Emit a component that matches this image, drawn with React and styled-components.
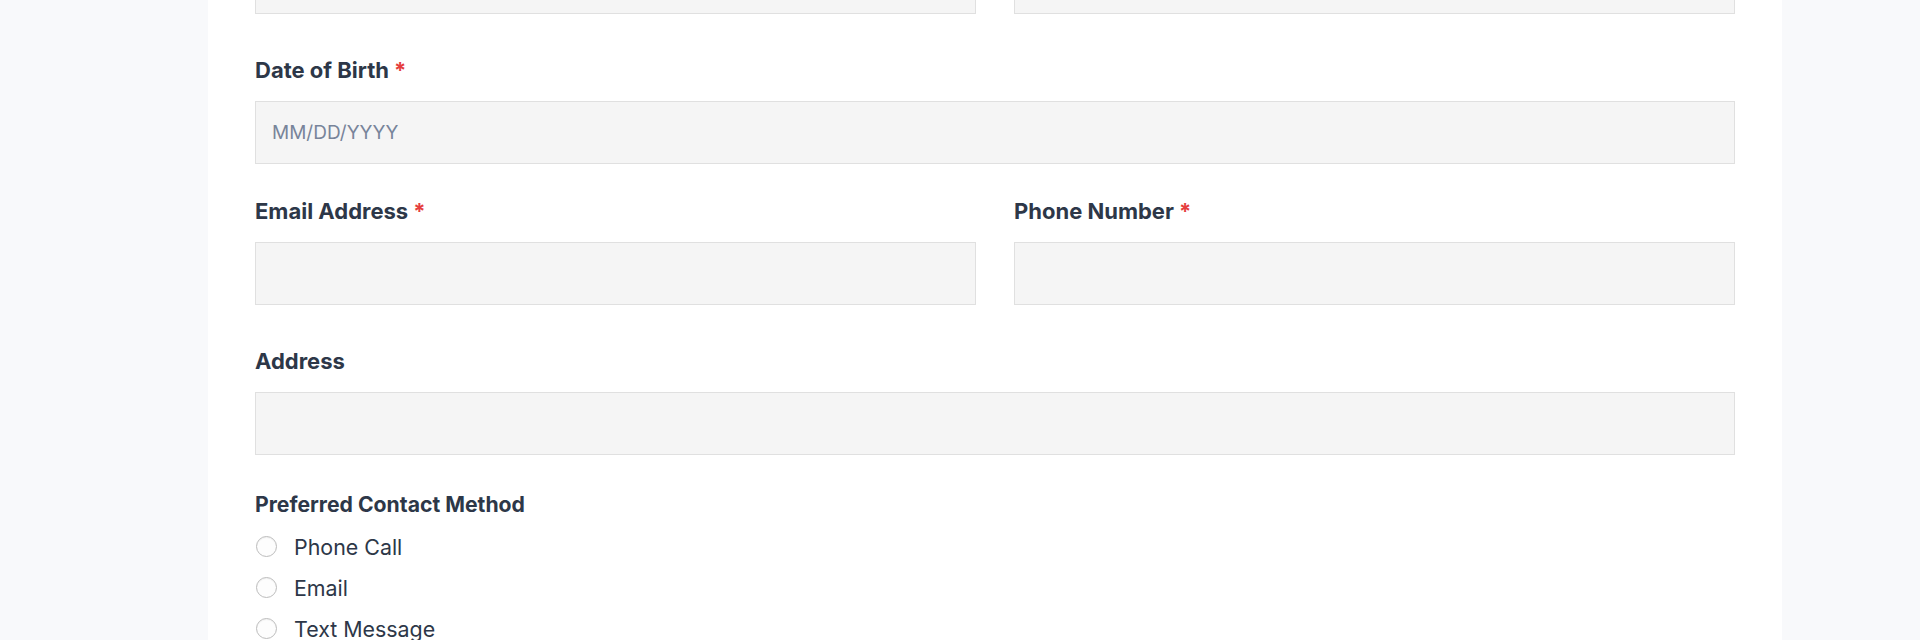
import React from 'react';
import styled, { createGlobalStyle } from 'styled-components';

const Global = createGlobalStyle`
  html, body { margin: 0; padding: 0; background: #f8f9fb; }
  body { font-family: Inter, "Noto Sans", sans-serif; -webkit-font-smoothing: antialiased; }
  * { box-sizing: border-box; }
`;

const Page = styled.div`
  height: 640px;
  overflow: hidden;
  padding-left: 208px;
`;

const Card = styled.form`
  width: 1574px;
  background: #ffffff;
  padding: 0 47px 40px;
  margin-top: -49px;
`;

const Row = styled.div`
  display: grid;
  grid-template-columns: 1fr 1fr;
  column-gap: 38px;
  margin-bottom: ${p => p.$mb || 0}px;
`;

const Group = styled.div`
  margin-bottom: ${p => p.$mb || 0}px;
`;

const Label = styled.label`
  display: block;
  font-size: ${p => (p.$small ? 21.2 : 22)}px;
  line-height: ${p => (p.$small ? 23 : 25)}px;
  font-weight: 700;
  color: #2d3748;
  margin-bottom: ${p => (p.$small ? 10 : 18)}px;
`;

const Req = styled.span`
  color: #e53e3e;
  margin-left: 5px;
`;

const Input = styled.input`
  display: block;
  width: 100%;
  height: 63px;
  padding: 0 16px;
  background: #f5f5f5;
  border: 1px solid #e0e0e0;
  border-radius: 0;
  font-family: inherit;
  font-size: 19px;
  color: #2d3748;
  outline: none;
  &::placeholder { color: #78849a; }
`;

const RadioList = styled.div`
  display: flex;
  flex-direction: column;
`;

const RadioRow = styled.label`
  display: flex;
  align-items: center;
  height: 41px;
  gap: 17px;
  padding-left: 1px;
  font-size: 21.4px;
  color: #2d3748;
  cursor: pointer;
`;

const RadioCircle = styled.span`
  width: 21px;
  height: 21px;
  border-radius: 50%;
  border: 1.5px solid #bcbcbc;
  background: #fdfdfd;
  box-shadow: inset 0 1px 1px rgba(0, 0, 0, 0.05);
  flex: none;
`;

const HiddenRadio = styled.input`
  display: none;
`;

const Field = ({ label, required, placeholder }) => (
  <div>
    <Label>
      {label}
      {required && <Req>*</Req>}
    </Label>
    <Input placeholder={placeholder} />
  </div>
);

export default function App() {
  return (
    <>
      <Global />
      <Page>
        <Card onSubmit={e => e.preventDefault()}>
          <Row $mb={44}>
            <Input aria-label="First Name" />
            <Input aria-label="Last Name" />
          </Row>
          <Group $mb={35}>
            <Field label="Date of Birth" required placeholder="MM/DD/YYYY" />
          </Group>
          <Row $mb={44}>
            <Field label="Email Address" required />
            <Field label="Phone Number" required />
          </Row>
          <Group $mb={38}>
            <Field label="Address" />
          </Group>
          <Group>
            <Label $small>Preferred Contact Method</Label>
            <RadioList>
              {['Phone Call', 'Email', 'Text Message'].map(opt => (
                <RadioRow key={opt}>
                  <HiddenRadio type="radio" name="contact" value={opt} />
                  <RadioCircle />
                  {opt}
                </RadioRow>
              ))}
            </RadioList>
          </Group>
        </Card>
      </Page>
    </>
  );
}
